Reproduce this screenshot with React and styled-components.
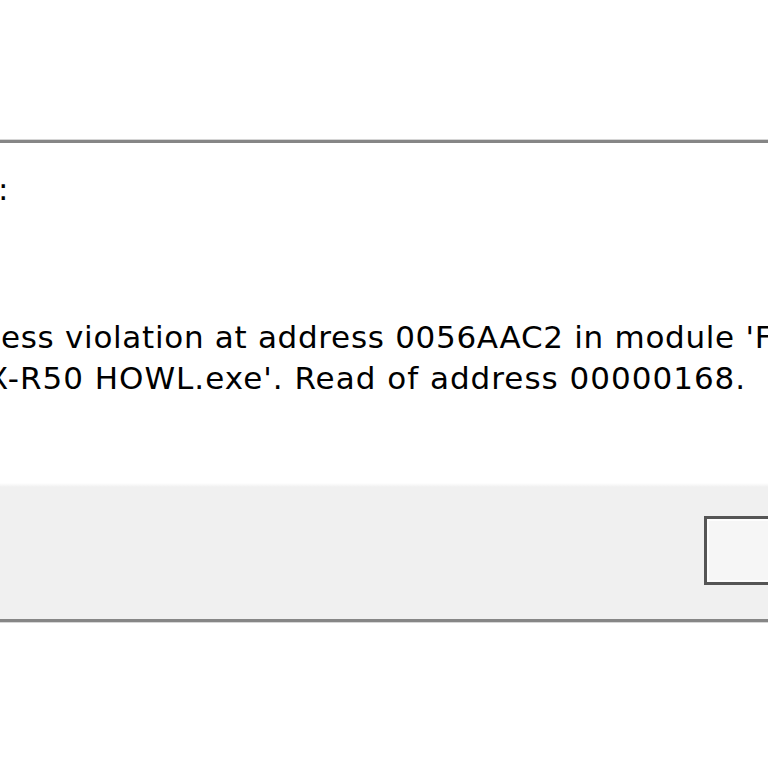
import React from "react";
import styled, { createGlobalStyle } from "styled-components";

const GlobalStyle = createGlobalStyle`
  html, body {
    margin: 0;
    padding: 0;
    background: #ffffff;
    overflow: hidden;
  }
`;

const Page = styled.div`
  width: 768px;
  height: 768px;
  padding-top: 140px;
  box-sizing: border-box;
  overflow: hidden;
  font-family: "DejaVu Sans", Tahoma, sans-serif;
  color: #000;
`;

const Dialog = styled.div`
  border-top: 3px solid #868686;
  border-bottom: 3px solid #868686;
  box-shadow: 0 1px 0 #d6d6d6, 0 -1px 0 #d6d6d6;
`;

const Body = styled.div`
  height: 340px;
  background: #ffffff;
  box-sizing: border-box;
  padding-top: 26px;
`;

const Line = styled.div`
  font-size: 31px;
  line-height: 41px;
  white-space: nowrap;
  text-indent: ${(p) => p.indent}px;
  letter-spacing: ${(p) => p.spacing}px;
`;

const Message = styled.div`
  margin-top: 107px;
`;

const Footer = styled.div`
  height: 136px;
  background: linear-gradient(#ffffff 0, #f0f0f0 4px, #f0f0f0 100%);
  display: flex;
  justify-content: flex-end;
  align-items: flex-start;
  padding-top: 33px;
  box-sizing: border-box;
  margin-right: -40px;
`;

const Button = styled.div`
  width: 104px;
  height: 69px;
  box-sizing: border-box;
  border: 3px solid #555555;
  background: #f6f6f6;
  box-shadow: inset 0 0 0 2px #fdfdfd;
`;

export default function App() {
  return (
    <>
      <GlobalStyle />
      <Page>
        <Dialog>
          <Body>
            <Line indent={-2} spacing={0}>:</Line>
            <Message>
              <Line indent={1} spacing={0.7}>ess violation at address 0056AAC2 in module 'F</Line>
              <Line indent={-13} spacing={1}>X-R50 HOWL.exe'. Read of address 00000168.</Line>
            </Message>
          </Body>
          <Footer>
            <Button />
          </Footer>
        </Dialog>
      </Page>
    </>
  );
}
